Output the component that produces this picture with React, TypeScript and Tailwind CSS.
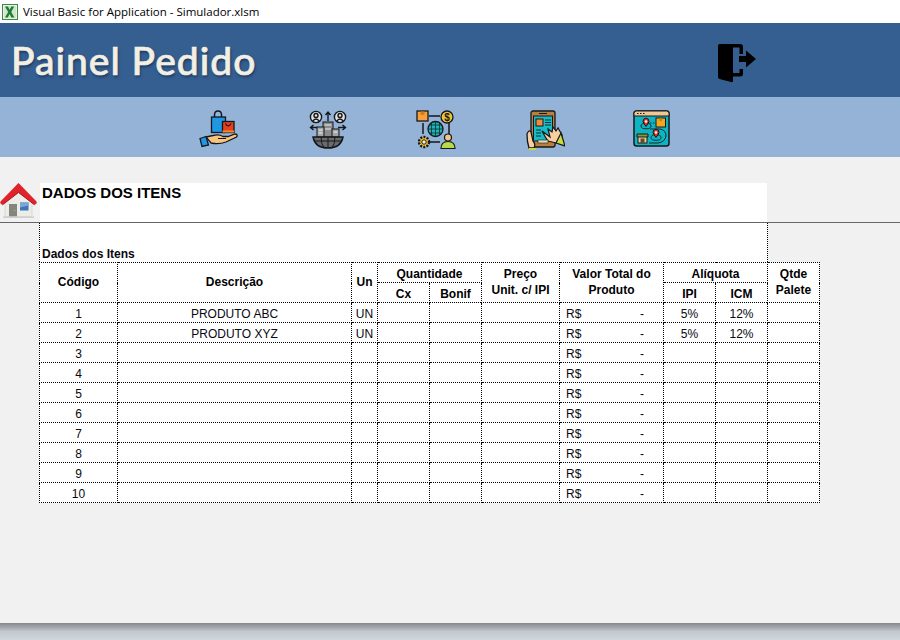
const headerCell = "border border-dotted border-black text-center align-middle font-bold leading-[16px] p-0 pt-[2px]";
const spanCell = "border border-dotted border-black text-center align-middle font-bold leading-[16px] p-0 pb-[2px]";
const cell = "border border-dotted border-black text-center align-middle p-0 pt-[2px] h-[20px] leading-[16px] text-[#08080f]";

const itens = [
  { codigo: 1, descricao: "PRODUTO ABC", un: "UN", ipi: "5%", icm: "12%" },
  { codigo: 2, descricao: "PRODUTO XYZ", un: "UN", ipi: "5%", icm: "12%" },
  { codigo: 3 },
  { codigo: 4 },
  { codigo: 5 },
  { codigo: 6 },
  { codigo: 7 },
  { codigo: 8 },
  { codigo: 9 },
  { codigo: 10 },
] as { codigo: number; descricao?: string; un?: string; ipi?: string; icm?: string }[];

function ExcelIcon() {
  return (
    <svg width="17" height="16" viewBox="0 0 17 16">
      <rect x="1.5" y="0.5" width="15" height="15" fill="#e8f3e6" stroke="#3d8a48" />
      <rect x="3" y="2" width="12" height="12" fill="#cfe6c8" />
      <path d="M4 2.500h3l1.600 3.200 1.700-3.200h2.900l-3 5.500 3.200 5.500h-3l-1.800-3.500-1.800 3.500H4l3.200-5.500z" fill="#1f7a34" />
    </svg>
  );
}

function ExitIcon() {
  return (
    <svg width="40" height="40" viewBox="0 0 40 40">
      <path d="M2 2.500 Q2 1 3.500 1 H24 Q27 1 27 4 V11 H23.500 V4.500 H17 V38 Q17 39.500 15 39 L3.500 36 Q2 35.500 2 34 Z" fill="#000" />
      <path d="M23.500 26 H27 V31 Q27 33.500 24 33.500 H17 V30 H23.500 Z" fill="#000" />
      <path d="M23 13 H30 V7.500 L40 16 L30 24.500 V19 H23 Z" fill="#000" />
    </svg>
  );
}

function HomeIcon() {
  return (
    <svg width="37" height="36" viewBox="0 0 37 36">
      <path d="M5 15 L18.500 6 L32 15 V33.500 H5 Z" fill="#ecece8" stroke="#c9c9c6" strokeWidth="0.600" />
      <path d="M18.500 0 L36.500 18.500 Q37.500 21.500 34.500 21.800 L18.500 9.500 L2.500 21.800 Q-0.500 21.500 0.500 18.500 Z" fill="#e0232b" />
      <path d="M2.500 21.800 L18.500 9.500 L34.500 21.800" fill="none" stroke="#a8161c" strokeWidth="1" />
      <rect x="9" y="21" width="8" height="12.500" fill="#85857f" />
      <circle cx="14.800" cy="27.500" r="0.600" fill="#e8c93a" />
      <rect x="20" y="19.500" width="8.500" height="8" fill="#3f74b5" />
      <path d="M20 19.500h8.500v3l-8.500 2z" fill="#7aa6d8" />
      <rect x="3" y="33.500" width="31" height="1.500" fill="#cfcfcc" />
    </svg>
  );
}

function BagIcon() {
  return (
    <svg width="40" height="40" viewBox="0 0 40 40">
      <path d="M15.500 9 V5 Q15.500 1 19 1 Q22.500 1 22.500 5 V9" fill="none" stroke="#111820" strokeWidth="1.500" />
      <rect x="12.500" y="7" width="14" height="15.500" fill="#2196e3" stroke="#111820" strokeWidth="1.300" />
      <rect x="23.500" y="11.500" width="11.500" height="11" fill="#e8401c" stroke="#111820" strokeWidth="1.300" />
      <rect x="23.500" y="20.500" width="11.500" height="2" fill="#f58a2a" />
      <path d="M26.500 13.500 Q29 18.500 32 13.500" fill="none" stroke="#111820" strokeWidth="1.200" />
      <path d="M7 27 L14 25.500 Q20 24 24 26.500 H29 L36 24 Q39.500 24.500 37.500 27 L27 32 Q20 34.500 12 33 Z" fill="#f9c37a" stroke="#111820" strokeWidth="1.300" />
      <path d="M1 28.500 L7 26.500 L9.500 35 L3 36.500 Z" fill="#2196e3" stroke="#111820" strokeWidth="1.300" />
      <path d="M19 28.500 H27" stroke="#111820" fill="none" />
    </svg>
  );
}

function WorldIcon() {
  return (
    <svg width="40" height="40" viewBox="0 0 40 40">
      <g fill="#e0e0e0" stroke="#14181c" strokeWidth="1.400">
        <circle cx="8" cy="7" r="5.600" />
        <circle cx="32" cy="7" r="5.600" />
      </g>
      <g fill="none" stroke="#14181c" strokeWidth="1.400">
        <circle cx="8" cy="5.500" r="2" />
        <path d="M4.500 11.500 Q8 6.500 11.500 11.500" />
        <circle cx="32" cy="5.500" r="2" />
        <path d="M28.500 11.500 Q32 6.500 35.500 11.500" />
        <path d="M20 11 V3 M17.500 5 L20 2 L22.500 5" />
        <path d="M10 17.500 H3 M5.500 15 L2.500 17.500 L5.500 20" />
        <path d="M30 17.500 H37 M34.500 15 L37.500 17.500 L34.500 20" />
      </g>
      <rect x="15" y="12" width="10" height="15" fill="#8b8b8b" stroke="#14181c" />
      <rect x="9" y="17" width="7" height="10" fill="#a5a5a5" stroke="#14181c" />
      <rect x="24" y="19" width="7" height="8" fill="#a5a5a5" stroke="#14181c" />
      <path d="M10.500 20h4 M10.500 23h4 M16.500 15h7 M17 19h6 M25.500 22h4" stroke="#eeeeee" strokeWidth="1" />
      <path d="M5 27 H35 Q33 38 20 38 Q7 38 5 27 Z" fill="#6a6a6a" stroke="#14181c" strokeWidth="1.400" />
      <path d="M6 31 H34 M20 27 V38 M13 27 Q13 34 16 38 M27 27 Q27 34 24 38" fill="none" stroke="#14181c" />
    </svg>
  );
}

function NetworkIcon() {
  return (
    <svg width="40" height="40" viewBox="0 0 40 40">
      <path d="M13 6 H24 M7 13 V24 M13 32 H24 M33 13 V24" stroke="#14181c" strokeWidth="1.500" />
      <rect x="1" y="1" width="11" height="10" fill="#f6a13c" stroke="#14181c" strokeWidth="1.300" />
      <rect x="4.500" y="1.500" width="4" height="3.500" fill="#d97a1f" />
      <circle cx="31" cy="7" r="6" fill="#f4c430" stroke="#14181c" strokeWidth="1.300" />
      <text x="31" y="10.500" textAnchor="middle" fontSize="10" fontWeight="700" fontFamily="Liberation Sans" fill="#14181c">$</text>
      <circle cx="19.500" cy="19" r="7.500" fill="#1fb5b5" stroke="#14181c" strokeWidth="1.300" />
      <path d="M12 19 H27 M13.500 15 H25.500 M13.500 23 H25.500 M19.500 11.500 V26.500 M15.500 13 V25 M23.500 13 V25" fill="none" stroke="#0c2c33" strokeWidth="0.800" />
      <circle cx="8" cy="32" r="5" fill="#f4c430" stroke="#14181c" strokeWidth="2.400" strokeDasharray="2 1.200" />
      <circle cx="8" cy="32" r="2.200" fill="#fff1c9" stroke="#14181c" />
      <circle cx="32" cy="27.500" r="3.500" fill="#f5c48a" stroke="#14181c" strokeWidth="1.200" />
      <path d="M25 38.500 Q25 31.500 32 31.500 Q39 31.500 39 38.500 Z" fill="#b8d94a" stroke="#14181c" strokeWidth="1.200" />
    </svg>
  );
}

function TabletIcon() {
  return (
    <svg width="40" height="40" viewBox="0 0 40 40">
      <rect x="6" y="1" width="24" height="36" rx="2" fill="#b9803d" stroke="#14181c" strokeWidth="1.300" />
      <path d="M14 3.500 H22" stroke="#14181c" />
      <rect x="8.500" y="6" width="19" height="25" fill="#16bcc6" stroke="#14181c" />
      <rect x="11" y="9" width="7" height="7" fill="#f28c38" stroke="#14181c" />
      <path d="M20 10h6 M20 12.500h6 M20 15h6 M11 20h5 M11 23h5 M11 26h5" stroke="#0c2c33" />
      <path d="M2 24 Q4 19 6 22 L8 31 Q11 34 9 38 H4 Q2 32 2 24 Z" fill="#f9cfa0" stroke="#14181c" strokeWidth="1.300" />
      <rect x="4" y="38" width="7" height="2" fill="#c3d93a" />
      <path d="M17 21 L25 27 L23 19 L27 22 L28 17 L31 21 L33 18 L37 25 L37 31 L31 33 L23 31 Q20 27 17 21 Z" fill="#f9cfa0" stroke="#14181c" strokeWidth="1.200" />
      <path d="M36 23 L40 36 L31 33 Z" fill="#c9dc3c" stroke="#14181c" strokeWidth="1.200" />
      <rect x="13" y="30" width="10" height="3" fill="#e6d9b8" stroke="#14181c" strokeWidth="0.600" />
    </svg>
  );
}

function MapIcon() {
  return (
    <svg width="40" height="40" viewBox="0 0 40 40">
      <rect x="1" y="1" width="35" height="35" rx="2.500" fill="#10b4c0" stroke="#14181c" strokeWidth="1.500" />
      <path d="M1 6 V3.500 Q1 1 3.500 1 H33.500 Q36 1 36 3.500 V6 Z" fill="#f0c893" stroke="#14181c" />
      <path d="M4 3.500h1.500 M7 3.500h1.500 M10 3.500h1.500" stroke="#14181c" />
      <ellipse cx="13" cy="16" rx="5" ry="2.800" fill="none" stroke="#0c2c33" />
      <path d="M13 8 Q16 8.500 16 11.500 Q15 14 13 16.500 Q11 14 10 11.500 Q10 8.500 13 8 Z" fill="#e6332a" stroke="#14181c" />
      <circle cx="13" cy="11.500" r="1.200" fill="#fff" />
      <rect x="23" y="8" width="9.500" height="9" fill="#f4a820" stroke="#14181c" />
      <path d="M26.500 8v3h2.500V8" fill="#c77c12" />
      <ellipse cx="23" cy="27.500" rx="5" ry="2.800" fill="none" stroke="#0c2c33" />
      <path d="M23 19 Q26 19.500 26 22.500 Q25 25 23 27.500 Q21 25 20 22.500 Q20 19.500 23 19 Z" fill="#e6332a" stroke="#14181c" />
      <circle cx="23" cy="22.500" r="1.200" fill="#fff" />
      <path d="M17 13h1.500 M20 13h1.500 M17 19 H27 Q33 20 33 26 Q32 32 25 33 H16" fill="none" stroke="#0c2c33" />
      <rect x="5" y="25" width="9" height="8" fill="#f0c893" stroke="#14181c" />
      <path d="M4 24h11v3H4z" fill="#7d9b3a" stroke="#14181c" />
      <rect x="7.500" y="28.500" width="4" height="4.500" fill="#6b4a2a" />
    </svg>
  );
}

export default function App() {
  return (
    <div className="w-[900px] h-[640px] overflow-hidden flex flex-col bg-[#d2d6dd] font-['Liberation_Sans',sans-serif] text-[12px] text-black">
      {/* title bar */}
      <div className="h-[23px] bg-white flex items-center pl-[1px] gap-[5px] font-['Open_Sans',sans-serif] text-[11.5px]">
        <ExcelIcon />
        <span>Visual Basic for Application - Simulador.xlsm</span>
      </div>

      {/* header */}
      <div className="h-[74px] bg-[#365f91] flex items-center relative">
        <h1 className="ml-[11px] font-['Lato',sans-serif] font-medium text-[39px] leading-none tracking-[1px] text-[#f3efe2] [-webkit-text-stroke:0.7px_#f3efe2] [text-shadow:1px_2px_3px_#17365d]">
          Painel Pedido
        </h1>
        <div className="absolute left-[716px] top-[20px]">
          <ExitIcon />
        </div>
      </div>

      {/* nav icons */}
      <div className="h-[60px] bg-[#95b3d7] flex items-center pl-[199px] pt-[5px] gap-[68.5px]">
        <BagIcon />
        <WorldIcon />
        <NetworkIcon />
        <TabletIcon />
        <MapIcon />
      </div>

      {/* main */}
      <div className="h-[466px] bg-[#f1f1f1] pt-[26px] flex flex-col">
        <div className="h-[39px] relative">
          <div className="absolute left-0 top-0">
            <HomeIcon />
          </div>
          <div className="ml-[40px] w-[727px] h-full bg-white pl-[2px] pt-[1px] text-[15px] leading-[17px] font-bold">
            DADOS DOS ITENS
          </div>
        </div>
        <div className="h-px bg-[#666]" />
        <div className="ml-[39px] w-[729px] h-[39px] bg-white border-x border-dotted border-black flex items-end pl-[2px] font-bold leading-[16px] text-[#08080f]">
          Dados dos Itens
        </div>
        <table className="ml-[39px] w-[781px] table-fixed border-collapse bg-white">
          <colgroup>
            <col className="w-[78px]" />
            <col className="w-[234px]" />
            <col className="w-[26px]" />
            <col className="w-[52px]" />
            <col className="w-[52px]" />
            <col className="w-[78px]" />
            <col className="w-[104px]" />
            <col className="w-[52px]" />
            <col className="w-[52px]" />
            <col className="w-[52px]" />
          </colgroup>
          <thead>
            <tr className="h-[20px]">
              <th rowSpan={2} className={spanCell}>Código</th>
              <th rowSpan={2} className={spanCell}>Descrição</th>
              <th rowSpan={2} className={spanCell}>Un</th>
              <th colSpan={2} className={headerCell}>Quantidade</th>
              <th rowSpan={2} className={spanCell}>Preço<br />Unit. c/ IPI</th>
              <th rowSpan={2} className={spanCell}>Valor Total do<br />Produto</th>
              <th colSpan={2} className={headerCell}>Alíquota</th>
              <th rowSpan={2} className={spanCell}>Qtde<br />Palete</th>
            </tr>
            <tr className="h-[20px]">
              <th className={headerCell}>Cx</th>
              <th className={headerCell}>Bonif</th>
              <th className={headerCell}>IPI</th>
              <th className={headerCell}>ICM</th>
            </tr>
          </thead>
          <tbody>
            {itens.map((item) => (
              <tr key={item.codigo} className="h-[20px]">
                <td className={cell}>{item.codigo}</td>
                <td className={cell}>{item.descricao}</td>
                <td className={cell}>{item.un}</td>
                <td className={cell}></td>
                <td className={cell}></td>
                <td className={cell}></td>
                <td className={cell}>
                  <div className="flex justify-between pl-[6px] pr-[19px]">
                    <span>R$</span>
                    <span>-</span>
                  </div>
                </td>
                <td className={cell}>{item.ipi}</td>
                <td className={cell}>{item.icm}</td>
                <td className={cell}></td>
              </tr>
            ))}
          </tbody>
        </table>
      </div>

      {/* window shadow */}
      <div className="h-[17px] bg-gradient-to-b from-[#85888e] via-[#c3c7ce] to-[#d2d6dd]" />
    </div>
  );
}
